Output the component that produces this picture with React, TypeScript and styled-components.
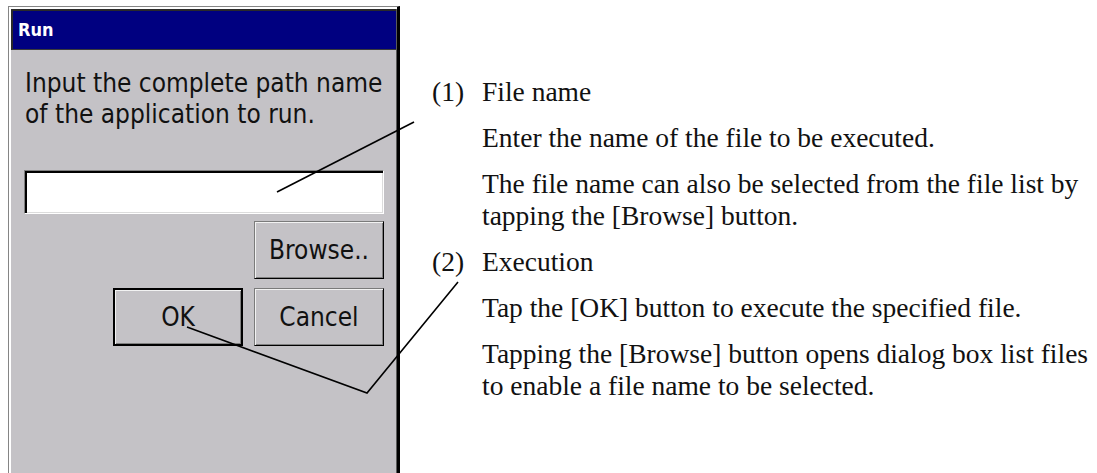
import styled, { createGlobalStyle } from "styled-components"

const GlobalStyle = createGlobalStyle`
    html, body {
        margin: 0;
        padding: 0;
        background: #ffffff;
        overflow: hidden;
    }
`

const UI_FONT = `"DejaVu Sans Condensed", "DejaVu Sans", sans-serif`

export default function App() {
    return (
        <Page>
            <GlobalStyle />
            <Window>
                <TitleBar>Run</TitleBar>
                <DialogBody>
                    <Prompt>
                        Input the complete path name
                        <br />
                        of the application to run.
                    </Prompt>
                    <PathInput type="text" />
                    <ButtonRow $top={7}>
                        <DialogButton>Browse..</DialogButton>
                    </ButtonRow>
                    <ButtonRow $top={9}>
                        <DialogButton $default>OK</DialogButton>
                        <DialogButton>Cancel</DialogButton>
                    </ButtonRow>
                </DialogBody>
            </Window>

            <Notes>
                <Label>(1)</Label>
                <Item>
                    <Line>File name</Line>
                    <Para>Enter the name of the file to be executed.</Para>
                    <Para>
                        The file name can also be selected from the file list by
                        <br />
                        tapping the [Browse] button.
                    </Para>
                </Item>
                <Label>(2)</Label>
                <Item>
                    <Line>Execution</Line>
                    <Para>Tap the [OK] button to execute the specified file.</Para>
                    <Para>
                        Tapping the [Browse] button opens dialog box list files
                        <br />
                        to enable a file name to be selected.
                    </Para>
                </Item>
            </Notes>

            <Callouts width="1097" height="473" viewBox="0 0 1097 473">
                <polyline points="277,192 414,122" />
                <polyline points="187,327 367,393 458,282" />
            </Callouts>
        </Page>
    )
}

const Page = styled.div`
    position: relative;
    display: flex;
    align-items: flex-start;
    width: 1097px;
    height: 473px;
    overflow: hidden;
`

const Window = styled.div`
    box-sizing: border-box;
    display: flex;
    flex-direction: column;
    flex-shrink: 0;
    width: 392px;
    height: 480px;
    margin: 6px 0 0 8px;
    padding: 2px 1px 0 2px;
    background: #c4c2c6;
    border-top: 1px solid #858585;
    border-left: 1px solid #858585;
    border-right: 3px solid #000000;
    box-shadow: inset 2px 2px #ffffff, inset -1px 0 #5a5a5a;
`

const TitleBar = styled.div`
    height: 38px;
    padding-left: 5px;
    background: #000080;
    border-top: 2px solid #2a2a2a;
    border-left: 2px solid #2a2a2a;
    border-bottom: 1px solid #3a3a3a;
    color: #ffffff;
    font-family: ${UI_FONT};
    font-stretch: condensed;
    font-weight: bold;
    font-size: 18px;
    line-height: 38px;
`

const DialogBody = styled.div`
    display: flex;
    flex-direction: column;
    padding: 18px 12px 0 13px;
`

const Prompt = styled.div`
    padding-left: 1px;
    color: #111111;
    font-family: ${UI_FONT};
    font-stretch: condensed;
    font-size: 26px;
    line-height: 31px;
`

const PathInput = styled.input`
    box-sizing: border-box;
    width: 100%;
    height: 44px;
    margin: 40px 0 0;
    padding: 0 6px;
    background: #ffffff;
    border: 1px solid;
    border-color: #808080 #ffffff #ffffff #808080;
    box-shadow: inset 2px 2px #000000, inset -1px -1px #dcdcdc;
    outline: none;
    font-family: ${UI_FONT};
    font-size: 24px;
`

const ButtonRow = styled.div<{ $top: number }>`
    display: flex;
    justify-content: flex-end;
    gap: 11px;
    margin-top: ${(p) => p.$top}px;
`

const DialogButton = styled.button<{ $default?: boolean }>`
    box-sizing: border-box;
    width: 130px;
    height: 58px;
    padding: 0;
    background: #c4c2c6;
    color: #111111;
    font-family: ${UI_FONT};
    font-stretch: condensed;
    font-size: 26px;
    border: ${(p) => (p.$default ? "2px solid #000000" : "1px solid")};
    border-color: ${(p) =>
        p.$default ? "#000000" : "#7b7b7b #000000 #000000 #7b7b7b"};
    box-shadow: inset 1px 1px #f2f2f2, inset -1px -1px #808080;
`

const Notes = styled.div`
    display: grid;
    grid-template-columns: 50px auto;
    margin: 76px 0 0 32px;
    color: #111111;
    font-family: "Liberation Serif", "Times New Roman", serif;
    font-size: 27.5px;
    line-height: 32px;
    white-space: nowrap;
`

const Label = styled.div`
    margin-top: 14px;

    &:first-child {
        margin-top: 0;
    }
`

const Item = styled.div`
    margin-top: 14px;

    &:nth-child(2) {
        margin-top: 0;
    }
`

const Line = styled.div``

const Para = styled.p`
    margin: 14px 0 0;
`

const Callouts = styled.svg`
    position: absolute;
    top: 0;
    left: 0;
    pointer-events: none;
    fill: none;
    stroke: #000000;
    stroke-width: 1.6;
`
